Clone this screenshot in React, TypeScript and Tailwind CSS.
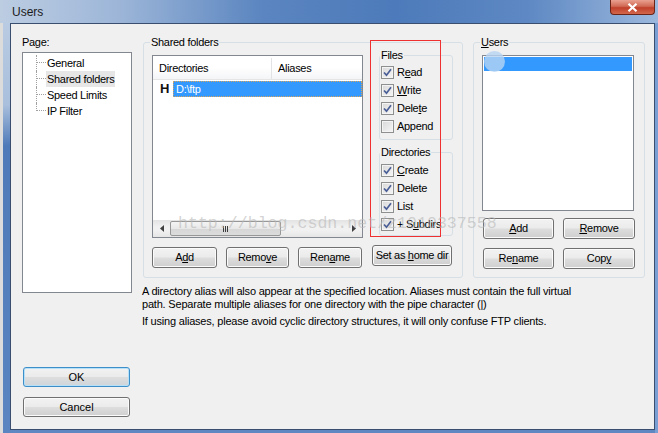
import React from 'react';

const ui = "font-['Liberation_Sans',Arial,sans-serif]";

function Btn({ children, className = '' }: { children: React.ReactNode; className?: string }) {
  return (
    <div
      className={`flex items-center justify-center h-[21px] rounded-[3px] border border-[#707070] bg-[linear-gradient(#f2f2f2_0%,#ebebeb_48%,#dddddd_52%,#cfcfcf_100%)] shadow-[inset_0_0_0_1px_#fbfbfb] text-[11px] tracking-[-0.3px] text-black ${className}`}
    >
      <span className="whitespace-pre">{children}</span>
    </div>
  );
}

function Check({ checked, children }: { checked: boolean; children: React.ReactNode }) {
  return (
    <div className="flex items-center gap-[3px] h-[18px]">
      <div className="w-[13px] h-[13px] border border-[#8e8f8f] bg-[linear-gradient(135deg,#d8d8d8,#f6f6f6)] shadow-[inset_0_0_0_1px_#f4f4f4] flex items-center justify-center">
        {checked && (
          <svg width="9" height="9" viewBox="0 0 9 9">
            <path d="M1 4.5 L3.5 7.2 L8 1.2" fill="none" stroke="#4a5f97" strokeWidth="1.7" />
          </svg>
        )}
      </div>
      <span className="text-[11px] tracking-[-0.3px] text-black leading-none whitespace-pre">{children}</span>
    </div>
  );
}

function TreeRow({ label, last, selected }: { label: string; last?: boolean; selected?: boolean }) {
  return (
    <div className="flex h-[16px]">
      <div className={`w-[10px] ${last ? '' : 'border-l border-dotted border-[#a0a0a0]'}`}>
        <div className={`h-[8px] border-b border-dotted border-[#a0a0a0] ${last ? 'border-l' : ''}`} />
      </div>
      <div
        className={`px-[1px] h-[16px] flex items-center text-[11px] tracking-[-0.3px] text-black ${selected ? 'bg-[#e6e6e6]' : ''}`}
      >
        {label}
      </div>
    </div>
  );
}

export default function App() {
  return (
    <div className={`relative w-[658px] h-[433px] overflow-hidden flex flex-col bg-[#5f88c2] ${ui}`}>
      {/* Title bar */}
      <div className="h-[23px] flex items-start bg-[linear-gradient(90deg,#bccde2_0%,#9db6d8_18%,#5a85c0_40%,#4d7aba_60%,#5d88c3_80%,#9cb8dd_100%)]">
        <span className="pl-[12px] pt-[3px] text-[12px] text-[#1b1b1b]">Users</span>
        <div className="ml-auto mr-[3px] w-[45px] h-[15px] rounded-b-[4px] border border-t-0 border-[#6b2418] bg-[linear-gradient(#e9a190_0%,#d06a55_45%,#c0402a_55%,#d2674c_100%)] flex items-center justify-center">
          <svg width="11" height="9" viewBox="0 0 11 9">
            <path d="M1.5 0.8 L9.5 8.2 M9.5 0.8 L1.5 8.2" stroke="#ffffff" strokeWidth="2.2" />
          </svg>
        </div>
      </div>

      <div className="flex flex-1">
        {/* left frame */}
        <div className="w-[10px] flex">
          <div className="w-[3px] bg-[#dcdcdc]" />
          <div className="w-[7px] bg-[linear-gradient(#b9cbe2_0%,#a9bfdc_20%,#4e7ab9_30%,#5a85c1_100%)]" />
        </div>

        {/* client */}
        <div className="w-[645px] h-[407px] border border-[#3a4f70] bg-[#f0f0f0] pl-[11px] pt-[12px] flex gap-[11px]">
          {/* left column */}
          <div className="w-[110px] flex flex-col">
            <div className="h-[13px] text-[11px] tracking-[-0.3px] leading-[13px] text-black">Page:</div>
            <div className="mt-[3px] h-[241px] border border-[#828790] bg-white pt-[2px] pl-[13px]">
              <TreeRow label="General" />
              <TreeRow label="Shared folders" selected />
              <TreeRow label="Speed Limits" />
              <TreeRow label="IP Filter" last />
            </div>
            <div className="mt-[74px] ml-[1px] w-[107px] h-[20px] rounded-[3px] border border-[#3c8fc8] bg-[linear-gradient(#f2f2f2_0%,#ebebeb_48%,#dddddd_52%,#cfd5da_100%)] shadow-[inset_0_0_0_1px_#b5e0f8] flex items-center justify-center text-[11px] text-black">
              OK
            </div>
            <div className="mt-[10px] ml-[1px] w-[107px] h-[20px] rounded-[3px] border border-[#707070] bg-[linear-gradient(#f2f2f2_0%,#ebebeb_48%,#dddddd_52%,#cfcfcf_100%)] shadow-[inset_0_0_0_1px_#fbfbfb] flex items-center justify-center text-[11px] text-black">
              Cancel
            </div>
          </div>

          {/* right area */}
          <div className="flex flex-col">
            <div className="flex gap-[10px]">
              {/* Shared folders */}
              <fieldset className="w-[320px] border border-[#d5dfe5] rounded-[3px] pl-[8px] pb-[9px]">
                <legend className="px-[1px] -ml-[2px] text-[11px] tracking-[-0.3px] leading-[13px] text-black">
                  Shared folders
                </legend>
                <div className="flex gap-[9px]">
                  <div className="w-[211px] flex flex-col">
                    {/* list view */}
                    <div className="mt-[6px] h-[183px] border border-[#828790] bg-white flex flex-col">
                      <div className="h-[24px] pt-[2px] flex border-b border-[#e5e5e5] bg-[linear-gradient(#ffffff_0%,#ffffff_50%,#f4f5f7_100%)] text-[11px] tracking-[-0.3px] text-black">
                        <div className="w-[119px] pl-[6px] flex items-center border-r border-[#e2e3e5]">Directories</div>
                        <div className="pl-[6px] flex items-center">Aliases</div>
                      </div>
                      <div className="mt-[1px] h-[16px] flex">
                        <div className="w-[20px] pl-[7px] flex items-center text-[13px] font-bold text-[#111]">H</div>
                        <div className="flex-1 bg-[#3399ff] border border-dotted border-[#d8a35a] pl-[2px] flex items-center text-[11px] tracking-[-0.3px] text-white">
                          D:\ftp
                        </div>
                      </div>
                      <div className="flex-1" />
                      {/* scrollbar */}
                      <div className="h-[17px] flex bg-[linear-gradient(#e3e3e3,#f1f1f1_40%,#f1f1f1_60%,#e6e6e6)]">
                        <div className="w-[17px] flex items-center justify-center">
                          <svg width="4" height="7" viewBox="0 0 4 7">
                            <path d="M4 0 L0 3.5 L4 7 Z" fill="#404040" />
                          </svg>
                        </div>
                        <div className="w-[111px] my-[1px] rounded-[2px] border border-[#979797] bg-[linear-gradient(#f4f4f4,#e8e8e8_50%,#d6d6d6_51%,#dcdcdc)] flex items-center justify-center gap-[1px]">
                          <div className="w-[1px] h-[6px] bg-[#3c3c3c]" />
                          <div className="w-[1px] h-[6px] bg-[#3c3c3c]" />
                          <div className="w-[1px] h-[6px] bg-[#3c3c3c]" />
                        </div>
                        <div className="flex-1" />
                        <div className="w-[17px] flex items-center justify-center">
                          <svg width="4" height="7" viewBox="0 0 4 7">
                            <path d="M0 0 L4 3.5 L0 7 Z" fill="#404040" />
                          </svg>
                        </div>
                      </div>
                    </div>
                    <div className="mt-[9px] flex gap-[9px]">
                      <Btn className="w-[65px]">
                        A<u>d</u>d
                      </Btn>
                      <Btn className="w-[63px]">
                        Remo<u>v</u>e
                      </Btn>
                      <Btn className="w-[64px]">
                        Ren<u>a</u>me
                      </Btn>
                    </div>
                  </div>

                  <div className="w-[81px] flex flex-col">
                    <div className="pl-[7px] flex flex-col">
                      <fieldset className="w-[74px] border border-[#d5dfe5] rounded-[3px] pl-[1px] pt-[1px] pb-[4px]">
                        <legend className="px-[1px] -ml-[1px] text-[11px] tracking-[-0.3px] leading-[13px] text-black">Files</legend>
                        <Check checked>
                          R<u>e</u>ad
                        </Check>
                        <Check checked>
                          <u>W</u>rite
                        </Check>
                        <Check checked>
                          Dele<u>t</u>e
                        </Check>
                        <Check checked={false}>Append</Check>
                      </fieldset>
                      <fieldset className="mt-[6px] w-[74px] border border-[#d5dfe5] rounded-[3px] pl-[1px] pt-[2px] pb-[2px]">
                        <legend className="px-[1px] -ml-[1px] text-[11px] tracking-[-0.3px] leading-[13px] text-black">Directories</legend>
                        <Check checked>
                          <u>C</u>reate
                        </Check>
                        <Check checked>Delete</Check>
                        <Check checked>List</Check>
                        <Check checked>
                          + S<u>u</u>bdirs
                        </Check>
                      </fieldset>
                    </div>
                    <Btn className="mt-[9px] w-[80px]">
                      Set as <u>h</u>ome dir
                    </Btn>
                  </div>
                </div>
              </fieldset>

              {/* Users */}
              <fieldset className="w-[172px] border border-[#d5dfe5] rounded-[3px] pl-[8px] pb-[8px]">
                <legend className="px-[1px] -ml-[2px] text-[11px] tracking-[-0.3px] leading-[13px] text-black">
                  <u>U</u>sers
                </legend>
                <div className="mt-[6px] w-[152px] h-[156px] border border-[#828790] bg-white pt-[1px] px-[1px]">
                  <div className="h-[14px] bg-[#3399ff]" />
                </div>
                <div className="mt-[7px] flex gap-[9px] pl-[1px]">
                  <Btn className="w-[71px]">
                    <u>A</u>dd
                  </Btn>
                  <Btn className="w-[72px]">
                    <u>R</u>emove
                  </Btn>
                </div>
                <div className="mt-[9px] flex gap-[9px] pl-[1px]">
                  <Btn className="w-[71px]">
                    Re<u>n</u>ame
                  </Btn>
                  <Btn className="w-[72px]">
                    Cop<u>y</u>
                  </Btn>
                </div>
              </fieldset>
            </div>

            <div className="mt-[7px] -ml-[1px] text-[11px] tracking-[-0.2px] leading-[12.5px] text-black">
              <p>
                A directory alias will also appear at the specified location. Aliases must contain the full virtual
                <br />
                path. Separate multiple aliases for one directory with the pipe character (|)
              </p>
              <p className="mt-[5px]">
                If using aliases, please avoid cyclic directory structures, it will only confuse FTP clients.
              </p>
            </div>
          </div>
        </div>

        {/* right frame */}
        <div className="flex-1 bg-[#7a9fd2]" />
      </div>

      {/* overlays: cursor blob, red highlight, watermark */}
      <div className="absolute left-[484px] top-[51px] w-[21px] h-[21px] rounded-full bg-[#b7d3f2]/80" />
      <div className="absolute left-[370px] top-[40px] w-[71px] h-[197px] border border-[#ee3030]" />
      <div className="absolute left-[178px] top-[214px] text-[16.6px] leading-[20px] font-['Liberation_Mono',monospace] text-[#b8b8b8]/60 whitespace-nowrap">
        http://blog.csdn.net/z1010337558
      </div>
    </div>
  );
}
